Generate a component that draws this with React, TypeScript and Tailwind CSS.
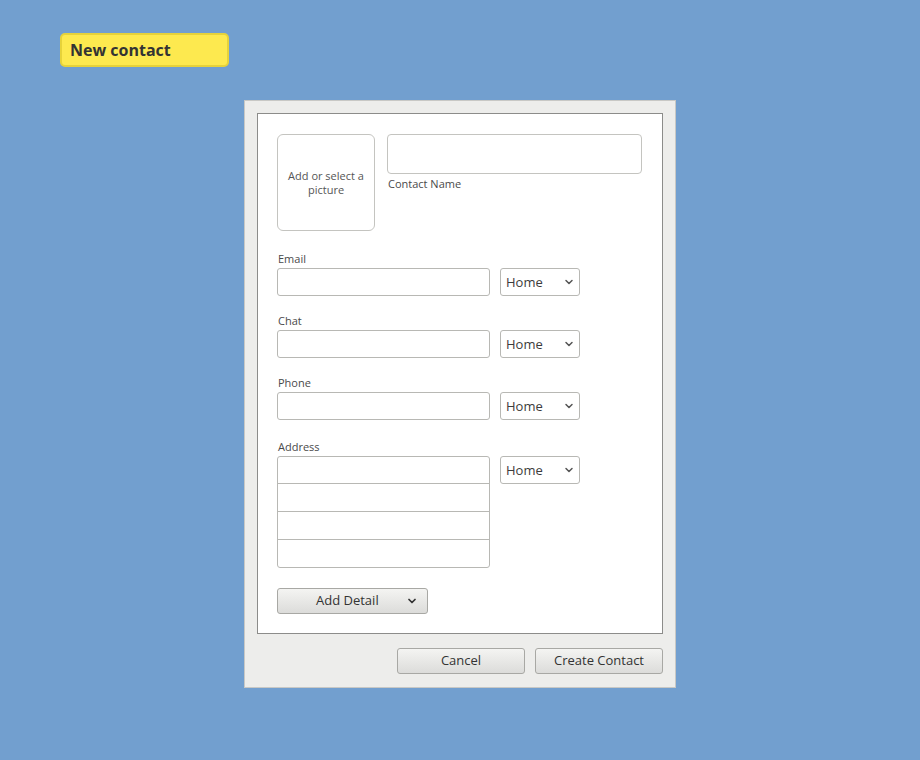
import { ChevronDown } from 'lucide-react';

const font = { fontFamily: '"Open Sans", "DejaVu Sans", sans-serif' };

function Field({ label, mt }: { label: string; mt: string }) {
  return (
    <div className={mt}>
      <p className="h-[14px] pl-[1px] text-[11px] leading-[14px] text-[#4a4a4a]">{label}</p>
      <div className="mt-[2px] flex gap-[10px]">
        <div className="h-[28px] w-[213px] rounded-[3px] border border-[#b8b8b4] bg-white" />
        <HomeSelect />
      </div>
    </div>
  );
}

function HomeSelect() {
  return (
    <div className="flex h-[28px] w-[80px] items-center justify-between rounded-[3px] border border-[#b8b8b4] bg-white pb-[1px] pl-[5px] pr-[4px] text-[13px] leading-[16px] text-[#3c3c3c]">
      <span>Home</span>
      <ChevronDown className="h-[12px] w-[12px] text-[#555]" strokeWidth={3} />
    </div>
  );
}

function GreyButton({ children, className }: { children: React.ReactNode; className?: string }) {
  return (
    <div
      className={
        'flex h-[26px] items-center rounded-[3px] border border-[#a8a8a4] bg-gradient-to-b from-[#f4f4f2] to-[#dcdcda] text-[13px] text-[#333] ' +
        (className ?? '')
      }
    >
      {children}
    </div>
  );
}

export default function App() {
  return (
    <div className="min-h-[760px] bg-[#729fcf] pl-[60px] pt-[33px]" style={font}>
      <div className="flex h-[34px] w-[169px] items-center rounded-[5px] border-2 border-[#e6d23a] bg-[#fde94f] pl-[8px] text-[16px] font-bold text-[#333]">
        New contact
      </div>

      <div className="ml-[184px] mt-[33px] h-[588px] w-[432px] border border-[#c8c8c5] bg-[#ededeb] p-[12px]">
        <div className="h-[521px] w-[406px] border border-[#8c8c8a] bg-white px-[19px] pt-[20px]">
          <div className="flex gap-[12px]">
            <div className="flex h-[97px] w-[98px] items-center justify-center rounded-[6px] border border-[#c4c4c0] px-2 text-center text-[11px] leading-[14px] text-[#555]">
              Add or select a picture
            </div>
            <div>
              <div className="h-[40px] w-[255px] rounded-[4px] border border-[#c4c4c0]" />
              <p className="mt-[3px] pl-[1px] text-[11px] leading-[14px] text-[#4a4a4a]">Contact Name</p>
            </div>
          </div>

          <Field label="Email" mt="mt-[21px]" />
          <Field label="Chat" mt="mt-[18px]" />
          <Field label="Phone" mt="mt-[18px]" />

          <div className="mt-[20px]">
            <p className="h-[14px] pl-[1px] text-[11px] leading-[14px] text-[#4a4a4a]">Address</p>
            <div className="mt-[2px] flex items-start gap-[10px]">
              <div className="w-[213px] overflow-hidden rounded-[3px] border border-[#b8b8b4]">
                <div className="h-[27px] border-b border-[#b8b8b4]" />
                <div className="h-[28px] border-b border-[#b8b8b4]" />
                <div className="h-[28px] border-b border-[#b8b8b4]" />
                <div className="h-[27px]" />
              </div>
              <HomeSelect />
            </div>
          </div>

          <GreyButton className="mt-[20px] w-[151px] justify-between pl-[38px] pr-[9px]">
            <span>Add Detail</span>
            <ChevronDown className="h-[12px] w-[12px] text-[#333]" strokeWidth={3.5} />
          </GreyButton>
        </div>

        <div className="mt-[14px] flex justify-end gap-[10px]">
          <GreyButton className="w-[128px] justify-center">Cancel</GreyButton>
          <GreyButton className="w-[128px] justify-center">Create Contact</GreyButton>
        </div>
      </div>
    </div>
  );
}
